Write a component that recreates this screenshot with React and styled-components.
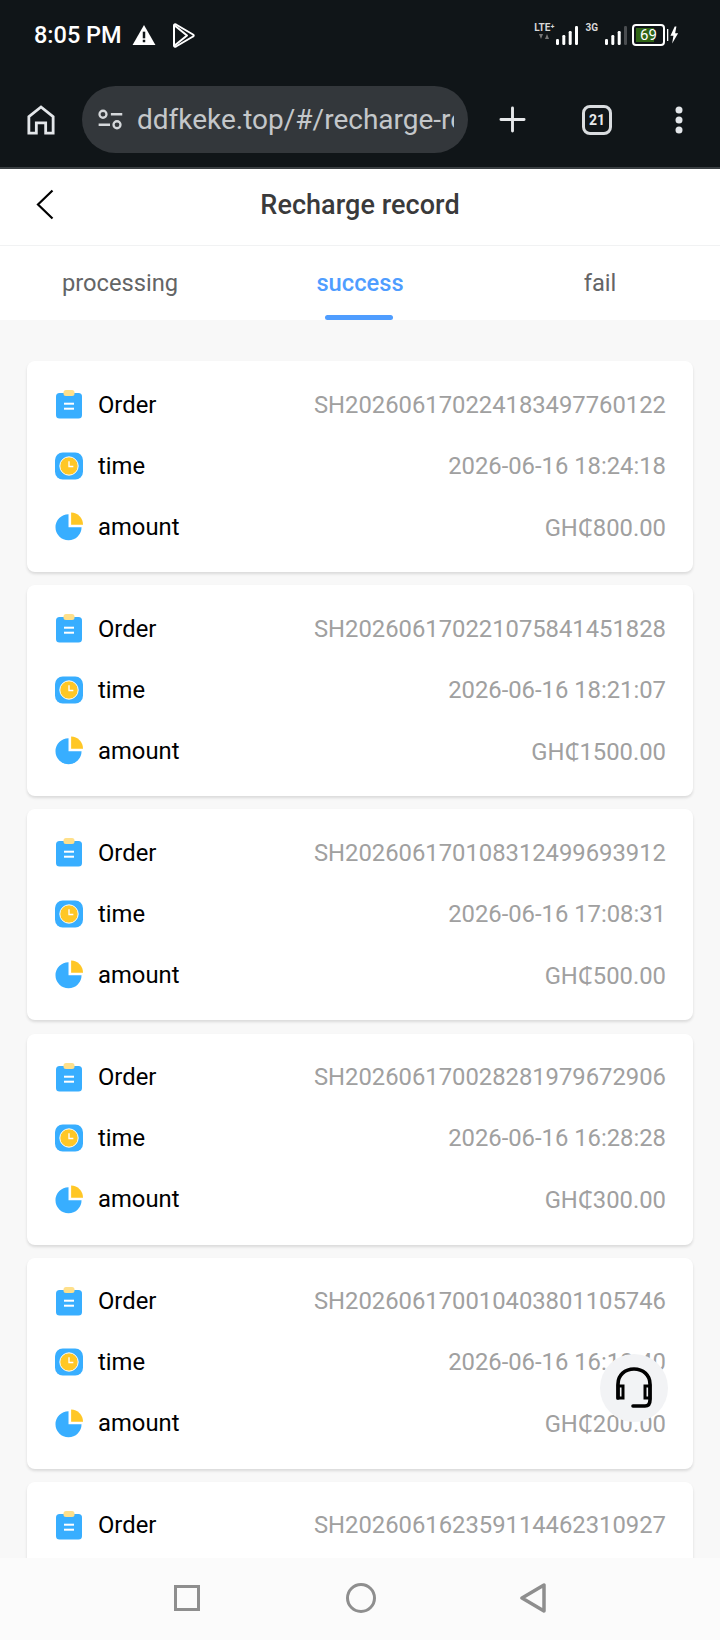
import React from "react";
import styled, { createGlobalStyle } from "styled-components";

const GlobalStyle = createGlobalStyle`
  html, body {
    margin: 0;
    padding: 0;
    background: #fff;
  }
  * {
    box-sizing: border-box;
  }
`;

const Page = styled.div`
  position: relative;
  display: flex;
  flex-direction: column;
  width: 720px;
  height: 1640px;
  overflow: hidden;
  font-family: Roboto, "Noto Sans", sans-serif;
  background: #f8f8f8;
`;

const Chrome = styled.div`
  flex: none;
  height: 169px;
  background: #101518;
  border-bottom: 2px solid #3a3f42;
`;

const StatusBar = styled.div`
  display: flex;
  align-items: center;
  justify-content: space-between;
  height: 70px;
  padding: 0 41px 0 34px;
  color: #fff;
`;

const StatusLeft = styled.div`
  display: flex;
  align-items: center;
`;

const Clock = styled.span`
  font-size: 23.5px;
  font-weight: 500;
  margin-right: 10px;
`;

const PlayIcon = styled.svg`
  margin-left: 16px;
`;

const StatusRight = styled.div`
  display: flex;
  align-items: center;
`;

const NetLabel = styled.div`
  display: flex;
  flex-direction: column;
  align-items: center;
  align-self: flex-start;
  height: 26px;
  margin: ${(p) => p.$margin};
  font-size: 10px;
  font-weight: 700;
  line-height: 12px;
  color: #d8d8d8;
`;

const Battery = styled.div`
  width: 33px;
  height: 22px;
  margin-left: 5px;
  padding: 2px;
  border: 2px solid #fff;
  border-radius: 4px;
  display: flex;
  align-items: center;
  justify-content: center;
  font-size: 15px;
  color: #fff;
  background: linear-gradient(to right, #2f6414 0 69%, transparent 69%);
  background-clip: content-box;
`;

const BoltIcon = styled.svg`
  margin-left: 2px;
`;

const BrowserBar = styled.div`
  display: flex;
  align-items: center;
  height: 97px;
  padding-top: 2px;
`;

const HomeSlot = styled.div`
  flex: none;
  display: flex;
  justify-content: center;
  width: 82px;
`;

const UrlPill = styled.div`
  flex: none;
  display: flex;
  align-items: center;
  gap: 14px;
  width: 386px;
  height: 67px;
  padding: 0 14px 0 15px;
  border-radius: 34px;
  background: #33373b;
`;

const UrlText = styled.div`
  flex: 1;
  overflow: hidden;
  white-space: nowrap;
  font-size: 28px;
  color: #c4c7ca;
`;

const BarActions = styled.div`
  flex: none;
  display: flex;
  align-items: center;
  gap: 56px;
  padding-left: 31px;
`;

const TabCount = styled.div`
  display: flex;
  align-items: center;
  justify-content: center;
  width: 30px;
  height: 30px;
  border: 3px solid #d9dcdf;
  border-radius: 8px;
  font-size: 14px;
  font-weight: 700;
  color: #e6e8ea;
`;

const DotsIcon = styled.svg`
  margin-left: 7px;
`;

const Header = styled.div`
  position: relative;
  flex: none;
  display: flex;
  align-items: center;
  justify-content: center;
  height: 77px;
  background: #fff;
  border-bottom: 1px solid #f1f2f3;
`;

const BackIcon = styled.svg`
  position: absolute;
  left: 36px;
  top: 20px;
`;

const Title = styled.div`
  margin-bottom: 5px;
  font-size: 27px;
  font-weight: 500;
  letter-spacing: 0.05px;
  color: #3a3a3b;
`;

const Tabs = styled.div`
  flex: none;
  display: grid;
  grid-template-columns: repeat(3, 240px);
  height: 74px;
  background: #fff;
`;

const Tab = styled.div`
  position: relative;
  display: flex;
  align-items: center;
  justify-content: center;
  font-size: 23.7px;
  font-weight: ${(p) => (p.$active ? 500 : 400)};
  color: ${(p) => (p.$active ? "#4f9dff" : "#646566")};
  &::after {
    content: "";
    display: ${(p) => (p.$active ? "block" : "none")};
    position: absolute;
    left: 85px;
    bottom: 0;
    width: 68px;
    height: 5px;
    border-radius: 3px;
    background: #4f9dff;
  }
`;

const List = styled.div`
  flex: 1;
  display: flex;
  flex-direction: column;
  gap: 13.2px;
  padding: 41px 27px 0;
  overflow: hidden;
`;

const Card = styled.div`
  flex: none;
  display: flex;
  flex-direction: column;
  height: 211px;
  padding: 13px 27px 14px 28px;
  border-radius: 8px;
  background: #fff;
  box-shadow: 0 2px 3px rgba(0, 0, 0, 0.12);
`;

const Row = styled.div`
  display: flex;
  align-items: center;
  height: 61px;
`;

const IconSlot = styled.div`
  flex: none;
  display: flex;
  justify-content: center;
  width: 28px;
  margin-right: 15px;
`;

const Label = styled.div`
  font-size: 23.8px;
  color: #000;
`;

const Value = styled.div`
  margin-left: auto;
  font-size: 23.8px;
  color: #a0a0a0;
`;

const Support = styled.div`
  position: absolute;
  left: 600px;
  top: 1354px;
  display: flex;
  align-items: center;
  justify-content: center;
  width: 68px;
  height: 68px;
  border-radius: 50%;
  background: #f2f3f5;
`;

const NavBar = styled.div`
  flex: none;
  display: flex;
  align-items: center;
  justify-content: center;
  gap: 146px;
  height: 82px;
  padding-bottom: 2px;
  background: #fbfbfb;
`;

const NavBack = styled.svg`
  margin-left: -3px;
`;

const HomeIcon = () => (
  <svg width="28" height="30" viewBox="0 0 30 32" fill="none" stroke="#e3e6e9" strokeWidth="3">
    <path d="M2 30V12.5L15 2l13 10.5V30h-8V19h-10v11z" />
  </svg>
);

const TuneIcon = () => (
  <svg width="26" height="21" viewBox="0 0 28 24" fill="none" stroke="#d5d8db" strokeWidth="2.6">
    <circle cx="6" cy="6" r="4" />
    <path d="M15 6h13M1 18h13" />
    <circle cx="22" cy="18" r="4" />
  </svg>
);

const Bars = ({ dim }) => (
  <svg width="22" height="19" viewBox="0 0 22 19" fill="#fff">
    <rect x="0" y="13" width="3" height="6" rx="1.2" />
    <rect x="6.300" y="9" width="3" height="10" rx="1.2" />
    <rect x="12.700" y="5" width="3" height="14" rx="1.2" />
    <rect x="19" y="0" width="3" height="19" rx="1.2" fill={dim ? "#4a4d50" : "#fff"} />
  </svg>
);

const OrderIcon = () => (
  <svg width="26" height="29" viewBox="0 0 26 29">
    <rect x="0" y="3" width="26" height="25.500" rx="3.500" fill="#38aeff" />
    <rect x="7.500" y="0" width="11" height="6" rx="2.500" fill="#ffe08a" />
    <rect x="8" y="12.700" width="10" height="2" fill="#fff" />
    <rect x="8" y="17.700" width="10" height="2" fill="#fff" />
  </svg>
);

const TimeIcon = () => (
  <svg width="29" height="28" viewBox="0 0 29 28">
    <rect width="29" height="28" rx="8" fill="#38aeff" />
    <circle cx="14.500" cy="14" r="9.500" fill="#ffc726" stroke="#fff" strokeWidth="1" />
    <path d="M14.500 9v5.500h4.500" fill="none" stroke="#fff" strokeWidth="1.400" />
  </svg>
);

const AmountIcon = () => (
  <svg width="29" height="29" viewBox="0 0 29 29">
    <path d="M14 1.700V15.200H27.500A13.500 13.500 0 1 1 14 1.700z" fill="#38aeff" />
    <path d="M16.700 0A12.500 12.500 0 0 1 29 12.700H16.700z" fill="#ffc726" />
  </svg>
);

const orders = [
  { id: "SH202606170224183497760122", time: "2026-06-16 18:24:18", amount: "GH₵800.00" },
  { id: "SH202606170221075841451828", time: "2026-06-16 18:21:07", amount: "GH₵1500.00" },
  { id: "SH202606170108312499693912", time: "2026-06-16 17:08:31", amount: "GH₵500.00" },
  { id: "SH202606170028281979672906", time: "2026-06-16 16:28:28", amount: "GH₵300.00" },
  { id: "SH202606170010403801105746", time: "2026-06-16 16:10:40", amount: "GH₵200.00" },
  // only the first row of this one is above the nav bar
  { id: "SH202606162359114462310927" },
];

export default function App() {
  return (
    <Page>
      <GlobalStyle />
      <Chrome>
        <StatusBar>
          <StatusLeft>
            <Clock>8:05 PM</Clock>
            <svg width="24" height="20" viewBox="0 0 24 21">
              <path d="M12 0L24 21H0z" fill="#fff" />
              <rect x="10.700" y="7" width="2.600" height="7" fill="#101518" />
              <rect x="10.700" y="15.500" width="2.600" height="2.600" fill="#101518" />
            </svg>
            <PlayIcon width="23" height="25" viewBox="0 0 23 25" fill="none" stroke="#fff" strokeWidth="2" strokeLinejoin="round">
              <path d="M2 2.500c0-1 1-1.500 2-1l17 10c1 .6 1 1.500 0 2L4 23.500c-1 .5-2 0-2-1z" />
              <path d="M2 2l13 10.500L2 23" />
            </PlayIcon>
          </StatusLeft>
          <StatusRight>
            <NetLabel $margin="0 2px 0 0">
              LTE⁺
              <svg width="10" height="5" viewBox="0 0 10 5" fill="#777">
                <path d="M0 0h4L2 5zM6 5h4L8 0z" />
              </svg>
            </NetLabel>
            <Bars />
            <NetLabel $margin="0 7px">3G</NetLabel>
            <Bars dim />
            <Battery>69</Battery>
            <BoltIcon width="12" height="20" viewBox="0 0 14 20">
              <rect x="0" y="3" width="1.500" height="14" fill="#fff" />
              <path d="M9 0L4 11h3.500L6 20l7-12H9.500L11 0z" fill="#fff" />
            </BoltIcon>
          </StatusRight>
        </StatusBar>
        <BrowserBar>
          <HomeSlot>
            <HomeIcon />
          </HomeSlot>
          <UrlPill>
            <TuneIcon />
            <UrlText>ddfkeke.top/#/recharge-re</UrlText>
          </UrlPill>
          <BarActions>
            <svg width="27" height="27" viewBox="0 0 28 28" stroke="#e6e8ea" strokeWidth="3" strokeLinecap="round">
              <path d="M14 2v24M2 14h24" />
            </svg>
            <TabCount>21</TabCount>
            <DotsIcon width="8" height="28" viewBox="0 0 8 28" fill="#e3e6e9">
              <circle cx="4" cy="4" r="3.500" />
              <circle cx="4" cy="14" r="3.500" />
              <circle cx="4" cy="24" r="3.500" />
            </DotsIcon>
          </BarActions>
        </BrowserBar>
      </Chrome>
      <Header>
        <BackIcon width="18" height="31" viewBox="0 0 18 31" fill="none" stroke="#000" strokeWidth="2.200">
          <path d="M16.500 1.500L2 15.500l14.500 14" />
        </BackIcon>
        <Title>Recharge record</Title>
      </Header>
      <Tabs>
        <Tab>processing</Tab>
        <Tab $active>success</Tab>
        <Tab>fail</Tab>
      </Tabs>
      <List>
        {orders.map((o) => (
          <Card key={o.id}>
            <Row>
              <IconSlot>
                <OrderIcon />
              </IconSlot>
              <Label>Order</Label>
              <Value>{o.id}</Value>
            </Row>
            {o.time && (
              <Row>
                <IconSlot>
                  <TimeIcon />
                </IconSlot>
                <Label>time</Label>
                <Value>{o.time}</Value>
              </Row>
            )}
            {o.amount && (
              <Row>
                <IconSlot>
                  <AmountIcon />
                </IconSlot>
                <Label>amount</Label>
                <Value>{o.amount}</Value>
              </Row>
            )}
          </Card>
        ))}
      </List>
      <NavBar>
        <svg width="26" height="26" viewBox="0 0 26 26" fill="none" stroke="#8e8e8e" strokeWidth="3">
          <rect x="1.500" y="1.500" width="23" height="23" />
        </svg>
        <svg width="30" height="30" viewBox="0 0 30 30" fill="none" stroke="#8e8e8e" strokeWidth="3">
          <circle cx="15" cy="15" r="13.500" />
        </svg>
        <NavBack width="28" height="30" viewBox="0 0 28 30" fill="none" stroke="#8e8e8e" strokeWidth="3.500" strokeLinejoin="round">
          <path d="M25 2v26L3 15z" />
        </NavBack>
      </NavBar>
      <Support>
        <svg width="38" height="42" viewBox="0 0 38 42" fill="none" stroke="#000" strokeWidth="3.600">
          <path d="M3 31V17C3 8 10 2 19 2s16 6 16 15v16c0 4-2 6-5 6H18" strokeLinecap="round" />
          <path d="M3 19h5v12H3zM35 19h-5v12h5z" strokeWidth="3" />
        </svg>
      </Support>
    </Page>
  );
}
